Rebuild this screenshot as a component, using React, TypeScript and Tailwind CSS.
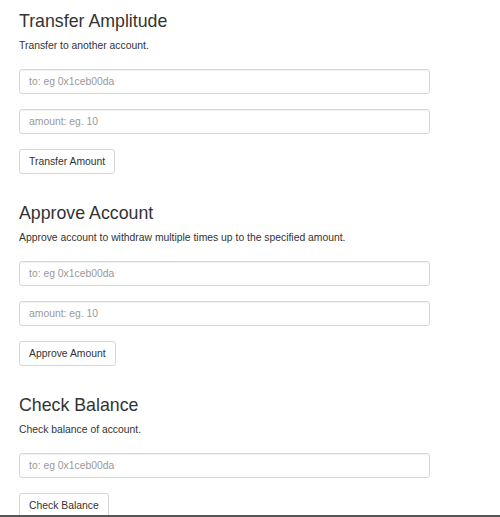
import React from 'react';

type Section = {
  title: string;
  description: string;
  fields: string[];
  action: string;
};

const sections: Section[] = [
  {
    title: 'Transfer Amplitude',
    description: 'Transfer to another account.',
    fields: ['to: eg 0x1ceb00da', 'amount: eg. 10'],
    action: 'Transfer Amount',
  },
  {
    title: 'Approve Account',
    description: 'Approve account to withdraw multiple times up to the specified amount.',
    fields: ['to: eg 0x1ceb00da', 'amount: eg. 10'],
    action: 'Approve Amount',
  },
  {
    title: 'Check Balance',
    description: 'Check balance of account.',
    fields: ['to: eg 0x1ceb00da'],
    action: 'Check Balance',
  },
];

function FormSection({ section }: { section: Section }) {
  return (
    <div className="flex flex-col items-start">
      <h3 className="h-[20px] text-[17.75px] leading-[20px] font-normal text-[#333]">
        {section.title}
      </h3>
      <p className="mt-[6.5px] text-[10.36px] leading-[15px] text-[#333]">
        {section.description}
      </p>
      <div className="mt-[16px] flex w-[411px] flex-col gap-[15px]">
        {section.fields.map((placeholder, i) => (
          <input
            key={i}
            type="text"
            placeholder={placeholder}
            className="h-[25px] w-full rounded-[3px] border border-[#d6d6d6] bg-white px-[9px] text-[10.36px] text-[#555] shadow-[inset_0_1px_1px_rgba(0,0,0,0.06)] outline-none placeholder:text-[#999]"
          />
        ))}
      </div>
      <button
        type="button"
        className="mt-[15px] h-[25px] rounded-[3px] border border-[#d6d6d6] bg-white px-[9px] text-[10.36px] leading-[15px] text-[#333]"
      >
        {section.action}
      </button>
    </div>
  );
}

export default function App() {
  return (
    <div className="relative min-h-[517px] bg-white pl-[19px] pt-[11px] font-['Liberation_Sans',Arial,sans-serif]">
      <div className="flex flex-col gap-[29.5px]">
        {sections.map((s) => (
          <FormSection key={s.title} section={s} />
        ))}
      </div>
      <div className="fixed bottom-0 left-0 h-[2px] w-full bg-[#555]" />
    </div>
  );
}
